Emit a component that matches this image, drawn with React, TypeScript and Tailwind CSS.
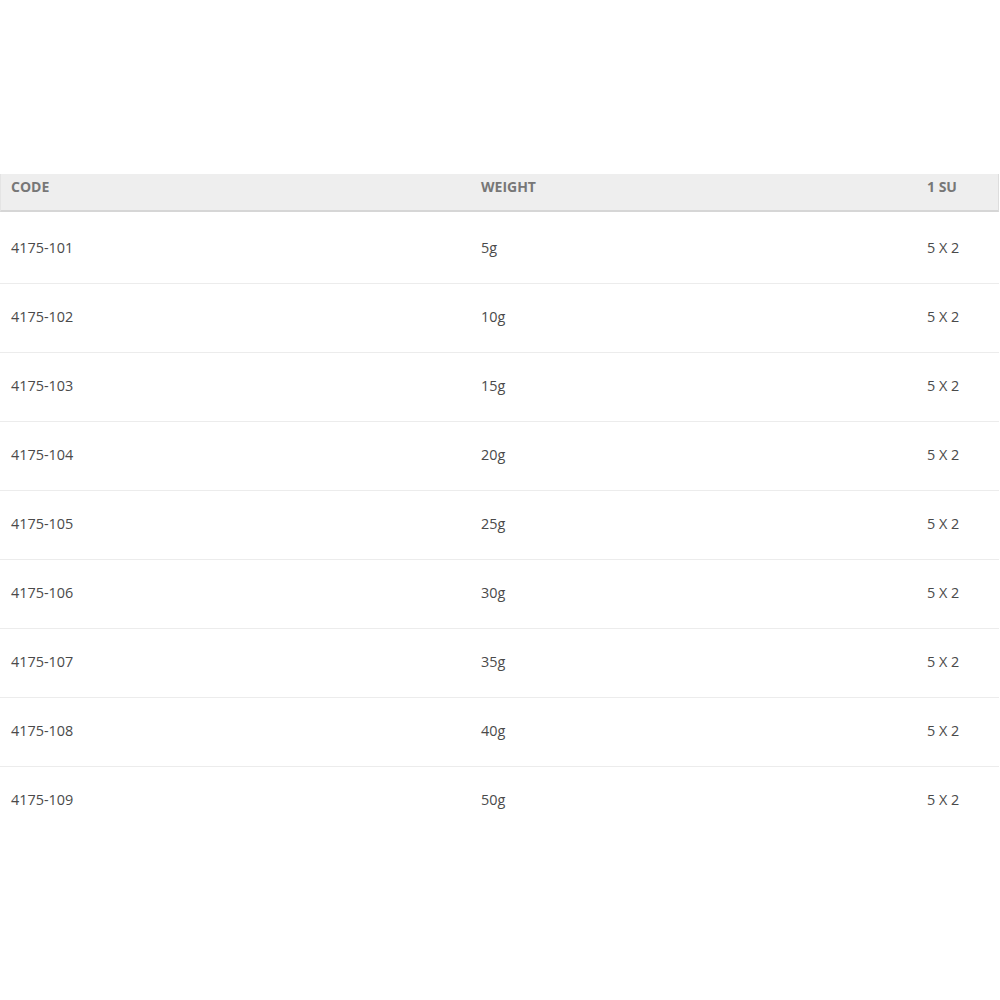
import React from "react";

const rows = [
  ["4175-101", "5g", "5 X 2"],
  ["4175-102", "10g", "5 X 2"],
  ["4175-103", "15g", "5 X 2"],
  ["4175-104", "20g", "5 X 2"],
  ["4175-105", "25g", "5 X 2"],
  ["4175-106", "30g", "5 X 2"],
  ["4175-107", "35g", "5 X 2"],
  ["4175-108", "40g", "5 X 2"],
  ["4175-109", "50g", "5 X 2"],
];

export default function App() {
  return (
    <div className="w-[1000px] h-[1000px] bg-white pt-[174px]" style={{ fontFamily: '"Open Sans", sans-serif' }}>
      <div className="w-[999px]">
        <div className="h-[38px] bg-[#eeeeee] border-l border-l-[#e4e4e4] border-r border-r-[#dddddd] border-b-2 border-b-[#d6d6d6] grid grid-cols-[470px_446px_1fr] pl-[10px] pt-[3px] text-[14px] leading-[20px] font-bold text-[#777777]">
          <div>CODE</div>
          <div>WEIGHT</div>
          <div>1 SU</div>
        </div>
        <div className="mt-[3px]">
          {rows.map((r, i) => (
            <div
              key={i}
              className={
                "h-[69px] grid grid-cols-[470px_446px_1fr] pl-[11px] pt-[23px] text-[14.4px] leading-[20px] text-[#4a4a4a] " +
                (i < rows.length - 1 ? "border-b border-b-[#ececec]" : "")
              }
            >
              <div>{r[0]}</div>
              <div>{r[1]}</div>
              <div>{r[2]}</div>
            </div>
          ))}
        </div>
      </div>
    </div>
  );
}
